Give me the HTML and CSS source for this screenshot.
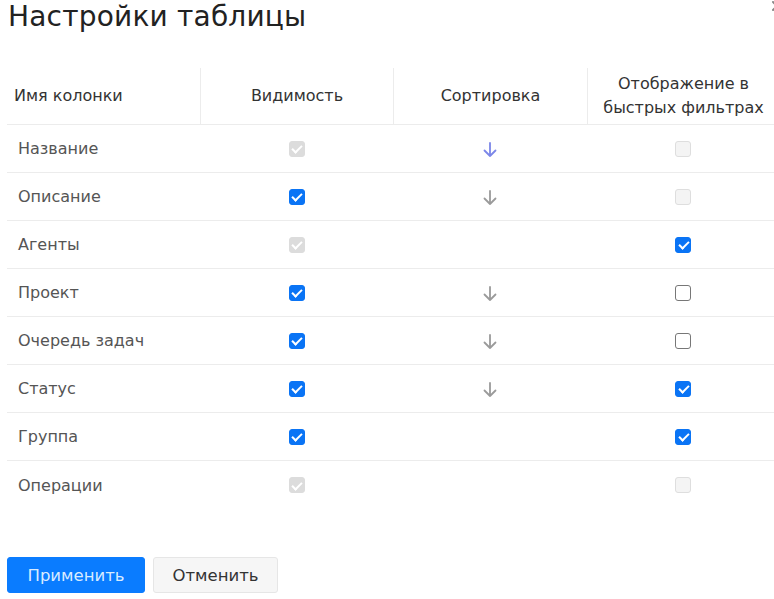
FILE: index.html
```html
<!DOCTYPE html>
<html lang="ru">
<head>
<meta charset="utf-8">
<link rel="stylesheet" href="styles.css">
</head>
<body>
<div class="modal">
  <button class="close" aria-label="Закрыть">
    <svg width="12" height="12" viewBox="0 0 12 12"><path d="M2 2L10 10M10 2L2 10" stroke="#888" stroke-width="2" stroke-linecap="round"/></svg>
  </button>
  <h1 class="title">Настройки таблицы</h1>
  <div class="table">
    <div class="row head">
      <div class="cell name">Имя колонки</div>
      <div class="cell">Видимость</div>
      <div class="cell">Сортировка</div>
      <div class="cell">Отображение в быстрых фильтрах</div>
    </div>

    <div class="row">
      <div class="cell name">Название</div>
      <div class="cell"><span class="cb checked disabled"></span></div>
      <div class="cell"><svg class="arrow active" viewBox="0 0 14 16"><path d="M7 1V14M1.5 8.5L7 14L12.5 8.5"/></svg></div>
      <div class="cell"><span class="cb disabled"></span></div>
    </div>
    <div class="row">
      <div class="cell name">Описание</div>
      <div class="cell"><span class="cb checked"></span></div>
      <div class="cell"><svg class="arrow" viewBox="0 0 14 16"><path d="M7 1V14M1.5 8.5L7 14L12.5 8.5"/></svg></div>
      <div class="cell"><span class="cb disabled"></span></div>
    </div>
    <div class="row">
      <div class="cell name">Агенты</div>
      <div class="cell"><span class="cb checked disabled"></span></div>
      <div class="cell"></div>
      <div class="cell"><span class="cb checked"></span></div>
    </div>
    <div class="row">
      <div class="cell name">Проект</div>
      <div class="cell"><span class="cb checked"></span></div>
      <div class="cell"><svg class="arrow" viewBox="0 0 14 16"><path d="M7 1V14M1.5 8.5L7 14L12.5 8.5"/></svg></div>
      <div class="cell"><span class="cb"></span></div>
    </div>
    <div class="row">
      <div class="cell name">Очередь задач</div>
      <div class="cell"><span class="cb checked"></span></div>
      <div class="cell"><svg class="arrow" viewBox="0 0 14 16"><path d="M7 1V14M1.5 8.5L7 14L12.5 8.5"/></svg></div>
      <div class="cell"><span class="cb"></span></div>
    </div>
    <div class="row">
      <div class="cell name">Статус</div>
      <div class="cell"><span class="cb checked"></span></div>
      <div class="cell"><svg class="arrow" viewBox="0 0 14 16"><path d="M7 1V14M1.5 8.5L7 14L12.5 8.5"/></svg></div>
      <div class="cell"><span class="cb checked"></span></div>
    </div>
    <div class="row">
      <div class="cell name">Группа</div>
      <div class="cell"><span class="cb checked"></span></div>
      <div class="cell"></div>
      <div class="cell"><span class="cb checked"></span></div>
    </div>
    <div class="row last">
      <div class="cell name">Операции</div>
      <div class="cell"><span class="cb checked disabled"></span></div>
      <div class="cell"></div>
      <div class="cell"><span class="cb disabled"></span></div>
    </div>
  </div>
  <div class="actions">
    <button class="btn primary">Применить</button>
    <button class="btn secondary">Отменить</button>
  </div>
</div>
</body>
</html>
```

FILE: styles.css
```css
html, body {
  margin: 0;
  padding: 0;
  background: #fff;
  overflow: hidden;
}
body {
  width: 774px;
  height: 599px;
  font-family: "DejaVu Sans", "Noto Sans", sans-serif;
  color: #333;
}
.modal {
  position: relative;
  padding: 0 0 0 7px;
  width: 780px;
}
.close {
  position: absolute;
  top: 0;
  right: 4px;
  border: 0;
  background: none;
  padding: 0;
  width: 12px;
  height: 12px;
}
.title {
  margin: 0;
  padding: 0 0 0 1px;
  font-size: 28px;
  font-weight: 400;
  line-height: 34px;
  color: #222;
  letter-spacing: 0.2px;
}
.table {
  margin-top: 34px;
  width: 772px;
}
.row {
  display: grid;
  grid-template-columns: 193px 193px 194px 192px;
  height: 48px;
  box-sizing: border-box;
  border-bottom: 1px solid #ececec;
}
.row.last {
  border-bottom: 0;
}
.row.head {
  height: 57px;
}
.cell {
  display: flex;
  align-items: center;
  justify-content: center;
  font-size: 16px;
  color: #555;
}
.cell.name {
  justify-content: flex-start;
  padding-left: 11px;
}
.head .cell {
  color: #333;
  text-align: center;
  line-height: 24px;
  border-left: 1px solid #ececec;
  margin: 0;
}
.head .cell.name {
  border-left: 0;
  padding-left: 7px;
}
.cb {
  width: 16px;
  height: 16px;
  box-sizing: border-box;
  border: 1.5px solid #777;
  border-radius: 3px;
  background: #fff;
  position: relative;
}
.cb.checked {
  background: #0a74f5;
  border-color: #0a74f5;
}
.cb.checked::after {
  content: "";
  position: absolute;
  left: 4.5px;
  top: 1.5px;
  width: 4px;
  height: 8px;
  border: solid #fff;
  border-width: 0 2px 2px 0;
  transform: rotate(45deg);
}
.cb.disabled {
  background: #f4f4f4;
  border-color: #dedede;
  border-width: 1px;
}
.cb.checked.disabled {
  background: #dcdcdc;
  border-color: #dcdcdc;
}
.arrow {
  width: 14px;
  height: 16px;
  fill: none;
  stroke: #9a9a9a;
  stroke-width: 1.8;
  stroke-linecap: round;
  stroke-linejoin: round;
  margin-top: 2px;
}
.arrow.active {
  stroke: #7b86e8;
}
.actions {
  display: flex;
  gap: 8px;
  margin-top: 48px;
}
.btn {
  height: 36px;
  font-family: inherit;
  font-size: 16.5px;
  border-radius: 3px;
  padding: 0;
  cursor: pointer;
}
.btn.primary {
  width: 138px;
  background: #0a7cff;
  border: 1px solid #0a7cff;
  color: #d8ebff;
}
.btn.secondary {
  width: 125px;
  background: #f6f6f6;
  border: 1px solid #e6e6e6;
  color: #333;
}
```
